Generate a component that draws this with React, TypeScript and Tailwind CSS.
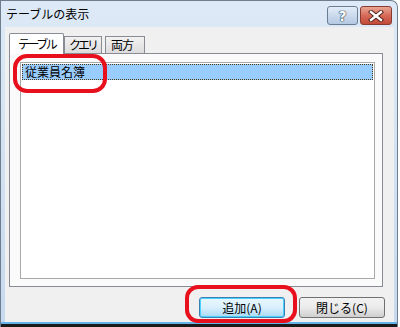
import React from "react";

const jp = { fontFamily: '"Noto Sans CJK JP", "Noto Sans", sans-serif' };

export default function App() {
  return (
    <div className="w-[400px] h-[327px] bg-white relative overflow-hidden" style={jp}>
      <div className="w-[398px] h-[327px] flex flex-col border-t border-l border-r border-[#6f7e8f] rounded-tr-[7px] bg-gradient-to-b from-[#dde9f6] to-[#c7d9ee]">
        {/* title bar */}
        <div className="h-[26px] flex items-center pl-[5px] pr-[5px] shrink-0">
          <span className="text-[12px] leading-none text-black">テーブルの表示</span>
          <div className="ml-auto flex gap-[2px] mt-[3px]">
            <div className="w-[31px] h-[19px] rounded-[3px] border border-[#6b7d93] bg-gradient-to-b from-[#e3edf8] via-[#cbdaec] to-[#b4c9e2] flex items-center justify-center">
              <span
                className="text-[14px] font-bold leading-none text-white"
                style={{ fontFamily: '"DejaVu Sans", sans-serif', textShadow: "0 0 1px #27384d, 0 0 1px #27384d, 0 0 1px #27384d" }}
              >
                ?
              </span>
            </div>
            <div className="w-[32px] h-[19px] rounded-[3px] border border-[#8a3b30] bg-gradient-to-b from-[#e9a696] via-[#d66a58] to-[#c24a38] flex items-center justify-center">
              <svg width="16" height="12" viewBox="0 0 16 12">
                <path d="M3 2 L13 10 M13 2 L3 10" stroke="#4a1a12" strokeWidth="4.2" strokeLinecap="square" />
                <path d="M3 2 L13 10 M13 2 L3 10" stroke="#ffffff" strokeWidth="2.4" strokeLinecap="square" />
              </svg>
            </div>
          </div>
        </div>
        {/* client */}
        <div className="flex-1 flex flex-col ml-[4px] mr-[3px] bg-[#f0f0f0] pl-[4px] pr-[8px] pt-[5px] pb-[4px] relative">
          {/* tabs */}
          <div className="flex items-end h-[21px] relative z-10">
            <div className="w-[55px] h-[21px] bg-white border border-b-0 border-[#898c95] rounded-t-[2px] flex items-center pl-[8px] text-[12px] leading-none text-black tracking-[-2.5px] -mb-px pb-[1px]">
              テーブル
            </div>
            <div className="w-[38px] h-[17px] bg-gradient-to-b from-[#f2f2f2] to-[#dcdcdc] border border-b-0 border-[#898c95] flex items-center pl-[4px] text-[12px] leading-none text-black tracking-[-3px]">
              クエリ
            </div>
            <div className="w-[40px] h-[17px] ml-[3px] bg-gradient-to-b from-[#f2f2f2] to-[#dcdcdc] border border-b-0 border-[#898c95] flex items-center pl-[5px] text-[12px] leading-none text-black tracking-[-1px]">
              両方
            </div>
          </div>
          {/* panel */}
          <div className="w-[374px] h-[234px] border border-[#898c95] bg-[#fafafa] pt-[8px] pl-[10px] pr-[7px] pb-[7px] flex">
            <div className="flex-1 bg-white border border-[#a9a9a9] p-[1px]">
              <div className="h-[16px] bg-[#99ccff] border border-dotted border-[#4a3a22] flex items-center pl-[2px] text-[12px] leading-none text-black">
                従業員名簿
              </div>
            </div>
          </div>
          {/* buttons */}
          <div className="flex justify-end gap-[14px] mt-[10px] mr-[1px]">
            <button className="w-[86px] h-[21px] rounded-[3px] border border-[#3c7fb1] bg-gradient-to-b from-[#eaf6fd] via-[#d9f0fc] to-[#a7d9f5] shadow-[inset_0_0_0_1px_#48d0ff] text-[12px] leading-none text-black">
              追加(A)
            </button>
            <button className="w-[86px] h-[21px] rounded-[3px] border border-[#707070] bg-gradient-to-b from-[#f2f2f2] via-[#ebebeb] to-[#cfcfcf] text-[12px] leading-none text-black">
              閉じる(C)
            </button>
          </div>
        </div>
        <div className="h-[2px] bg-[#62b4e6] shrink-0" />
        <div className="h-[3px] bg-[#1a1a1a] shrink-0" />
      </div>
      {/* annotations */}
      <div className="absolute left-[13px] top-[54px] w-[94px] h-[39px] border-[4px] border-[#e8101c] rounded-[14px]" />
      <div className="absolute left-[185px] top-[285px] w-[112px] h-[38px] border-[4px] border-[#e8101c] rounded-[13px]" />
    </div>
  );
}
